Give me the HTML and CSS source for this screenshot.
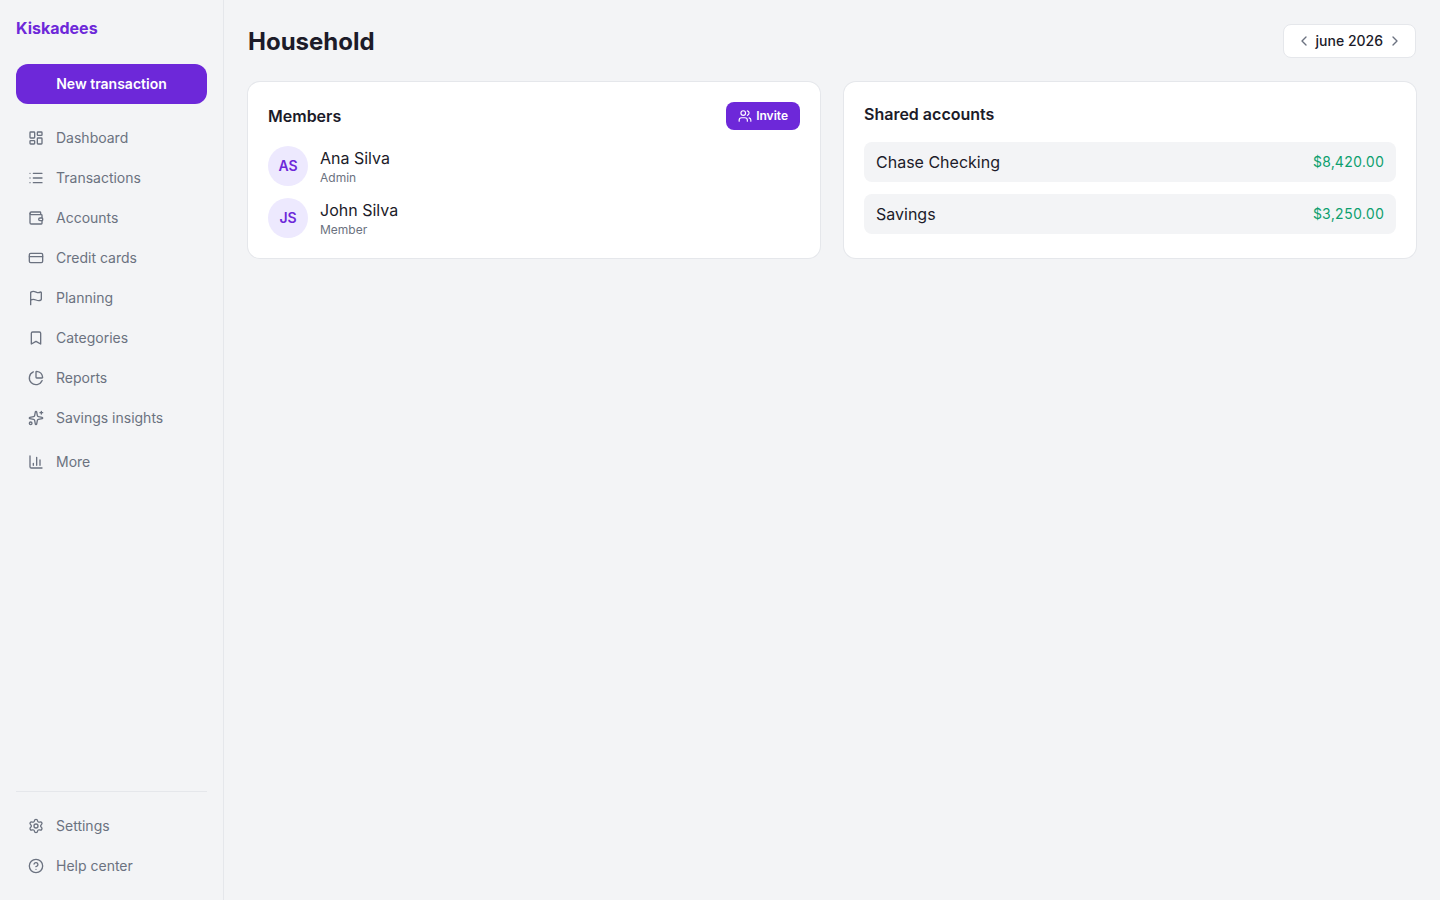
FILE: index.html
```html
<!DOCTYPE html>
<html lang="en">
<head>
  <meta charset="UTF-8" />
  <meta name="viewport" content="width=device-width, initial-scale=1.0"/>
  <title>Household - Kiskadees</title>
  <link rel="stylesheet" href="styles.css">
</head>
<body>

  <aside class="sidebar">
    <a class="logo" href="#">Kiskadees</a>
    <button class="btn new-btn" type="button">New transaction</button>

    <nav class="nav">
      <a href="#">
        <svg class="icon" viewBox="0 0 24 24"><rect x="3" y="3" width="7" height="9" rx="1"/><rect x="14" y="3" width="7" height="5" rx="1"/><rect x="14" y="12" width="7" height="9" rx="1"/><rect x="3" y="16" width="7" height="5" rx="1"/></svg>
        Dashboard
      </a>
      <a href="#">
        <svg class="icon" viewBox="0 0 24 24"><path d="M3 5h.01M3 12h.01M3 19h.01M8 5h13M8 12h13M8 19h13"/></svg>
        Transactions
      </a>
      <a href="#">
        <svg class="icon" viewBox="0 0 24 24"><path d="M19 7V4a1 1 0 0 0-1-1H5a2 2 0 0 0 0 4h15a1 1 0 0 1 1 1v4h-3a2 2 0 0 0 0 4h3a1 1 0 0 0 1-1v-2a1 1 0 0 0-1-1"/><path d="M3 5v14a2 2 0 0 0 2 2h15a1 1 0 0 0 1-1v-4"/></svg>
        Accounts
      </a>
      <a href="#">
        <svg class="icon" viewBox="0 0 24 24"><rect x="2" y="5" width="20" height="14" rx="2"/><path d="M2 10h20"/></svg>
        Credit cards
      </a>
      <a href="#">
        <svg class="icon" viewBox="0 0 24 24"><path d="M4 22V4a1 1 0 0 1 .4-.8A6 6 0 0 1 8 2c3 0 5 2 7.333 2q2 0 3.067-.8A1 1 0 0 1 20 4v10a1 1 0 0 1-.4.8A6 6 0 0 1 16 16c-3 0-5-2-8-2a6 6 0 0 0-4 1.528"/></svg>
        Planning
      </a>
      <a href="#">
        <svg class="icon" viewBox="0 0 24 24"><path d="m19 21-7-4-7 4V5a2 2 0 0 1 2-2h10a2 2 0 0 1 2 2v16z"/></svg>
        Categories
      </a>
      <a href="#">
        <svg class="icon" viewBox="0 0 24 24"><path d="M21 12c.552 0 1.005-.449.95-.998a10 10 0 0 0-8.953-8.951c-.55-.055-.998.398-.998.95v8a1 1 0 0 0 1 1z"/><path d="M21.21 15.89A10 10 0 1 1 8 2.83"/></svg>
        Reports
      </a>
      <a href="#">
        <svg class="icon" viewBox="0 0 24 24"><path d="M11.017 2.814a1 1 0 0 1 1.966 0l1.051 5.558a2 2 0 0 0 1.594 1.594l5.558 1.051a1 1 0 0 1 0 1.966l-5.558 1.051a2 2 0 0 0-1.594 1.594l-1.051 5.558a1 1 0 0 1-1.966 0l-1.051-5.558a2 2 0 0 0-1.594-1.594l-5.558-1.051a1 1 0 0 1 0-1.966l5.558-1.051a2 2 0 0 0 1.594-1.594z"/><path d="M20 2v4M22 4h-4"/><circle cx="4" cy="20" r="2"/></svg>
        Savings insights
      </a>
      <a class="more" href="#">
        <svg class="icon" viewBox="0 0 24 24"><path d="M3 3v16a2 2 0 0 0 2 2h16M18 17V9M13 17V5M8 17v-3"/></svg>
        More
      </a>
    </nav>

    <nav class="nav nav-bottom">
      <a href="#">
        <svg class="icon" viewBox="0 0 24 24"><path d="M9.671 4.136a2.34 2.34 0 0 1 4.659 0 2.34 2.34 0 0 0 3.319 1.915 2.34 2.34 0 0 1 2.33 4.033 2.34 2.34 0 0 0 0 3.831 2.34 2.34 0 0 1-2.33 4.033 2.34 2.34 0 0 0-3.319 1.915 2.34 2.34 0 0 1-4.659 0 2.34 2.34 0 0 0-3.32-1.915 2.34 2.34 0 0 1-2.33-4.033 2.34 2.34 0 0 0 0-3.831A2.34 2.34 0 0 1 6.35 6.051a2.34 2.34 0 0 0 3.319-1.915"/><circle cx="12" cy="12" r="3"/></svg>
        Settings
      </a>
      <a href="#">
        <svg class="icon" viewBox="0 0 24 24"><circle cx="12" cy="12" r="10"/><path d="M9.09 9a3 3 0 0 1 5.83 1c0 2-3 3-3 3M12 17h.01"/></svg>
        Help center
      </a>
    </nav>
  </aside>

  <main class="content">
    <header class="header">
      <h1>Household</h1>
      <div class="month">
        <button type="button" aria-label="Previous month">
          <svg class="icon" viewBox="0 0 24 24"><path d="m15 18-6-6 6-6"/></svg>
        </button>
        <span>june 2026</span>
        <button type="button" aria-label="Next month">
          <svg class="icon" viewBox="0 0 24 24"><path d="m9 18 6-6-6-6"/></svg>
        </button>
      </div>
    </header>

    <div class="cards">
      <section class="card">
        <div class="card-head">
          <h2>Members</h2>
          <button class="btn invite-btn" type="button">
            <svg class="icon" viewBox="0 0 24 24"><path d="M16 21v-2a4 4 0 0 0-4-4H6a4 4 0 0 0-4 4v2"/><circle cx="9" cy="7" r="4"/><path d="M22 21v-2a4 4 0 0 0-3-3.87M16 3.13a4 4 0 0 1 0 7.75"/></svg>
            Invite
          </button>
        </div>
        <ul class="list">
          <li class="member">
            <span class="avatar">AS</span>
            <div>
              <p>Ana Silva</p>
              <p class="role">Admin</p>
            </div>
          </li>
          <li class="member">
            <span class="avatar">JS</span>
            <div>
              <p>John Silva</p>
              <p class="role">Member</p>
            </div>
          </li>
        </ul>
      </section>

      <section class="card">
        <div class="card-head">
          <h2>Shared accounts</h2>
        </div>
        <ul class="list">
          <li class="account">
            <span>Chase Checking</span>
            <span class="amount">$8,420.00</span>
          </li>
          <li class="account">
            <span>Savings</span>
            <span class="amount">$3,250.00</span>
          </li>
        </ul>
      </section>
    </div>
  </main>

</body>
</html>
```
FILE: styles.css
```css
* {
  box-sizing: border-box;
  margin: 0;
  padding: 0;
}

body {
  display: flex;
  min-height: 100vh;
  font-family: Inter, sans-serif;
  font-size: 16px;
  line-height: 24px;
  color: #1c1b29;
  background: #f3f4f6;
}

a {
  color: inherit;
  text-decoration: none;
}

button {
  font: inherit;
  color: inherit;
  border: none;
  background: none;
  cursor: pointer;
}

ul {
  list-style: none;
}

.icon {
  width: 16px;
  height: 16px;
  flex-shrink: 0;
  fill: none;
  stroke: currentColor;
  stroke-width: 2;
  stroke-linecap: round;
  stroke-linejoin: round;
}

.btn {
  color: #fff;
  background: #6d28d9;
}

.btn:hover {
  background: #5b21b6;
}

/* sidebar */
.sidebar {
  display: flex;
  flex-direction: column;
  width: 224px;
  flex-shrink: 0;
  padding: 16px;
  border-right: 1px solid #e5e7eb;
}

.logo {
  font-weight: 700;
  color: #6d28d9;
}

.new-btn {
  margin: 24px 0 16px;
  padding: 10px;
  border-radius: 12px;
  font-size: 14px;
  font-weight: 600;
  line-height: 20px;
}

.nav {
  display: flex;
  flex-direction: column;
  gap: 4px;
}

.nav a {
  display: flex;
  align-items: center;
  gap: 12px;
  padding: 8px 12px;
  border-radius: 8px;
  font-size: 14px;
  line-height: 20px;
  color: #6b7280;
}

.nav a:hover {
  background: #e5e7eb;
}

.nav .more {
  margin-top: 4px;
}

.nav-bottom {
  margin-top: auto;
  padding-top: 16px;
  border-top: 1px solid #e5e7eb;
}

/* content */
.content {
  flex: 1;
  padding: 24px;
}

.header {
  display: flex;
  align-items: flex-end;
  justify-content: space-between;
  margin-bottom: 24px;
}

h1 {
  font-size: 24px;
  font-weight: 700;
  line-height: 32px;
}

h2 {
  font-size: 16px;
  font-weight: 600;
}

.month {
  display: flex;
  align-items: center;
  gap: 4px;
  padding: 6px 12px;
  border: 1px solid #e5e7eb;
  border-radius: 8px;
  font-size: 14px;
  font-weight: 500;
  line-height: 20px;
  background: #fff;
}

.month button {
  display: flex;
  color: #6b7280;
}

.cards {
  display: grid;
  grid-template-columns: repeat(2, 1fr);
  gap: 24px;
}

.card {
  padding: 20px;
  border-radius: 12px;
  background: #fff;
  box-shadow: 0 0 0 1px #e5e7eb;
}

.card-head {
  display: flex;
  align-items: center;
  justify-content: space-between;
  margin-bottom: 16px;
}

.invite-btn {
  display: flex;
  align-items: center;
  gap: 4px;
  padding: 6px 12px;
  border-radius: 8px;
  font-size: 12px;
  font-weight: 600;
  line-height: 16px;
}

.invite-btn .icon {
  width: 14px;
  height: 14px;
}

.list {
  display: flex;
  flex-direction: column;
  gap: 12px;
}

.member {
  display: flex;
  align-items: center;
  gap: 12px;
}

.avatar {
  display: flex;
  align-items: center;
  justify-content: center;
  width: 40px;
  height: 40px;
  border-radius: 50%;
  font-size: 14px;
  font-weight: 600;
  color: #6d28d9;
  background: #ede9fe;
}

.role {
  font-size: 12px;
  line-height: 16px;
  color: #6b7280;
}

.account {
  display: flex;
  align-items: center;
  justify-content: space-between;
  padding: 8px 12px;
  border-radius: 8px;
  background: #f3f4f6;
}

.amount {
  font-size: 14px;
  font-variant-numeric: tabular-nums;
  color: #0d9f6e;
}

@media (max-width: 900px) {
  .cards {
    grid-template-columns: 1fr;
  }
}
```
